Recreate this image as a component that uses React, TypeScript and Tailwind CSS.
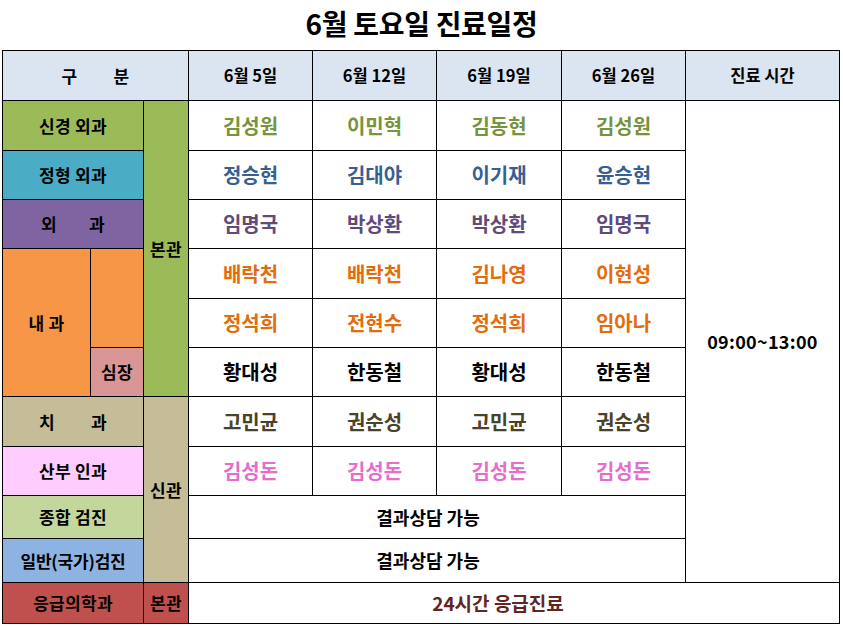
import React from "react";

const cellBase = "flex items-center justify-center font-bold";

type NameRow = { names: string[]; color: string };

const rows: NameRow[] = [
  { names: ["김성원", "이민혁", "김동현", "김성원"], color: "text-[#77933c]" },
  { names: ["정승현", "김대야", "이기재", "윤승현"], color: "text-[#376092]" },
  { names: ["임명국", "박상환", "박상환", "임명국"], color: "text-[#604a7b]" },
  { names: ["배락천", "배락천", "김나영", "이현성"], color: "text-[#e46c0a]" },
  { names: ["정석희", "전현수", "정석희", "임아나"], color: "text-[#e46c0a]" },
  { names: ["황대성", "한동철", "황대성", "한동철"], color: "text-black" },
  { names: ["고민균", "권순성", "고민균", "권순성"], color: "text-[#494429]" },
  { names: ["김성돈", "김성돈", "김성돈", "김성돈"], color: "text-[#e46dcd]" },
];

const rowStarts = [
  "row-start-2",
  "row-start-3",
  "row-start-4",
  "row-start-5",
  "row-start-6",
  "row-start-7",
  "row-start-8",
  "row-start-9",
];
const colStarts = ["col-start-4", "col-start-5", "col-start-6", "col-start-7"];

const label = "text-[17px] tracking-[0.3px]";

export default function App() {
  return (
    <div className="w-[843px] h-[626px] bg-white font-['Noto_Sans_CJK_KR',sans-serif] text-black">
      <div className="h-[50px] flex items-center justify-center pb-[5px]">
        <h1 className="text-[28px] font-bold leading-none tracking-[-0.3px]">6월 토요일 진료일정</h1>
      </div>
      <div className="ml-[2px] w-[838px] grid grid-cols-[87px_52px_44px_123px_123px_124px_123px_153px] grid-rows-[49px_49px_48px_48px_49px_48px_48px_49px_48px_42px_43px_40px] gap-px bg-black border border-black">
        {/* header */}
        <div className={`${cellBase} row-start-1 col-start-1 col-span-3 bg-[#dbe5f1] ${label} gap-[36px]`}>
          <span>구</span>
          <span>분</span>
        </div>
        {["6월 5일", "6월 12일", "6월 19일", "6월 26일"].map((d, i) => (
          <div key={d} className={`${cellBase} row-start-1 ${colStarts[i]} bg-[#dbe5f1] text-[16.5px]`}>
            {d}
          </div>
        ))}
        <div className={`${cellBase} row-start-1 col-start-8 bg-[#dbe5f1] text-[16.5px]`}>진료 시간</div>

        {/* left labels */}
        <div className={`${cellBase} row-start-2 col-start-1 col-span-2 bg-[#9bbb59] ${label}`}>신경 외과</div>
        <div className={`${cellBase} row-start-3 col-start-1 col-span-2 bg-[#4bacc6] ${label}`}>정형 외과</div>
        <div className={`${cellBase} row-start-4 col-start-1 col-span-2 bg-[#8064a2] ${label} gap-[32px]`}>
          <span>외</span>
          <span>과</span>
        </div>
        <div className={`${cellBase} row-start-5 row-span-3 col-start-1 bg-[#f79646] ${label}`}>내 과</div>
        <div className={`row-start-5 row-span-2 col-start-2 bg-[#f79646]`} />
        <div className={`${cellBase} row-start-7 col-start-2 bg-[#d99694] ${label}`}>심장</div>
        <div className={`${cellBase} row-start-2 row-span-6 col-start-3 bg-[#9bbb59] ${label}`}>본관</div>

        <div className={`${cellBase} row-start-8 col-start-1 col-span-2 bg-[#c4bd97] ${label} gap-[36px]`}>
          <span>치</span>
          <span>과</span>
        </div>
        <div className={`${cellBase} row-start-9 col-start-1 col-span-2 bg-[#ffccff] ${label}`}>산부 인과</div>
        <div className={`${cellBase} row-start-10 col-start-1 col-span-2 bg-[#c3d69b] ${label}`}>종합 검진</div>
        <div className={`${cellBase} row-start-11 col-start-1 col-span-2 bg-[#8db3e2] text-[17px] tracking-[-0.2px]`}>일반(국가)검진</div>
        <div className={`${cellBase} row-start-8 row-span-4 col-start-3 bg-[#c4bd97] ${label}`}>신관</div>
        <div className={`${cellBase} row-start-12 col-start-1 col-span-2 bg-[#c0504d] ${label}`}>응급의학과</div>
        <div className={`${cellBase} row-start-12 col-start-3 bg-[#c0504d] ${label}`}>본관</div>

        {/* names */}
        {rows.map((r, ri) =>
          r.names.map((n, ci) => (
            <div
              key={`${ri}-${ci}`}
              className={`${cellBase} ${rowStarts[ri]} ${colStarts[ci]} bg-white text-[20px] ${r.color}`}
            >
              {n}
            </div>
          ))
        )}

        <div className={`${cellBase} row-start-10 col-start-4 col-span-4 bg-white text-[18px] pr-[18px]`}>결과상담 가능</div>
        <div className={`${cellBase} row-start-11 col-start-4 col-span-4 bg-white text-[18px] pr-[18px]`}>결과상담 가능</div>

        <div className={`${cellBase} row-start-2 row-span-10 col-start-8 bg-white text-[18px] tracking-[0.3px]`}>09:00~13:00</div>

        <div className={`${cellBase} row-start-12 col-start-4 col-span-5 bg-white text-[19px] text-[#632523] pr-[32px]`}>
          24시간 응급진료
        </div>
      </div>
    </div>
  );
}
